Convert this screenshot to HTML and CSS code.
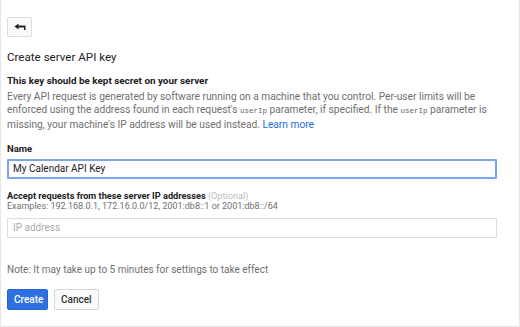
FILE: index.html
```html
<!DOCTYPE html>
<html>
<head>
    <title>Create server API key</title>
    <meta name="viewport" content="width=device-width, initial-scale=1.0">
    <link rel="stylesheet" href="styles.css">
</head>
<body>
    <div class="panel">
        <button class="back-btn" type="button" aria-label="Back">
            <svg width="12" height="9" viewBox="0 0 12 9">
                <path d="M0.5 3.5 L4.5 0.5 L4.5 2.6 L11.5 2.6 L11.5 7 L10 7 L10 4.4 L4.5 4.4 L4.5 6.5 Z" fill="#222"/>
            </svg>
        </button>

        <h1>Create server API key</h1>

        <h2>This key should be kept secret on your server</h2>
        <p class="desc">
            Every API request is generated by software running on a machine that you control. Per-user limits will be<br>
            enforced using the address found in each request's <code>userIp</code> parameter, if specified. If the <code>userIp</code> parameter is<br>
            missing, your machine's IP address will be used instead. <a href="#">Learn more</a>
        </p>

        <!-- 이름 입력 -->
        <label class="field-label" for="key-name">Name</label>
        <input type="text" id="key-name" class="text-input focused" value="My Calendar API Key">

        <!-- IP 주소 입력 -->
        <label class="field-label ip-label" for="ip-input">Accept requests from these server IP addresses <span class="optional">(Optional)</span></label>
        <div class="hint">Examples: 192.168.0.1, 172.16.0.0/12, 2001:db8::1 or 2001:db8::/64</div>
        <input type="text" id="ip-input" class="text-input ip-input" placeholder="IP address">

        <div class="note">Note: It may take up to 5 minutes for settings to take effect</div>

        <div class="actions">
            <button type="button" class="btn primary">Create</button>
            <button type="button" class="btn">Cancel</button>
        </div>
    </div>
</body>
</html>
```

FILE: styles.css
```css
* {
    margin: 0;
    padding: 0;
    box-sizing: border-box;
    font-family: Roboto, 'Liberation Sans', sans-serif;
}

body {
    background: white;
    width: 520px;
    height: 327px;
}

.panel {
    width: 520px;
    height: 327px;
    border: 1px solid #e8e8e8;
    border-top: none;
    padding: 17px 22px 0 6px;
}

.back-btn {
    width: 25px;
    height: 20px;
    background: #fafafa;
    border: 1px solid #dcdcdc;
    border-radius: 2px;
    display: flex;
    align-items: center;
    justify-content: center;
    cursor: pointer;
}

h1 {
    font-size: 11.6px;
    font-weight: 400;
    color: #222;
    margin-top: 13px;
    line-height: 14px;
}

h2 {
    font-size: 9.9px;
    font-weight: 700;
    color: #222;
    margin-top: 10px;
    line-height: 13px;
}

.desc {
    font-size: 10.2px;
    color: #6f6f6f;
    line-height: 13px;
    margin-top: 3px;
    white-space: nowrap;
}

.desc code {
    font-family: 'Liberation Mono', monospace;
    font-size: 7.5px;
    color: #666;
}

.desc a {
    color: #1a6ce0;
    text-decoration: none;
}

.field-label {
    display: block;
    font-size: 9.5px;
    font-weight: 700;
    color: #222;
    margin-top: 11px;
    line-height: 13px;
}

.ip-label {
    font-size: 9.2px;
    margin-top: 11px;
    line-height: 11px;
}

.optional {
    font-weight: 400;
    color: #bbb;
}

.hint {
    font-size: 9px;
    color: #6f6f6f;
    line-height: 10px;
    margin-top: 0;
}

.text-input {
    display: block;
    width: 490px;
    height: 20px;
    margin-top: 4px;
    padding: 0 5px;
    border: 1px solid #dcdcdc;
    border-radius: 1px;
    font-size: 10px;
    color: #222;
    outline: none;
}

.text-input.focused {
    border: 2px solid #7ea4ef;
    padding: 0 4px;
    height: 19.5px;
}

.ip-input {
    margin-top: 7px;
}

.text-input::placeholder {
    color: #aaa;
}

.note {
    font-size: 10px;
    color: #6f6f6f;
    margin-top: 25px;
    line-height: 13px;
}

.actions {
    display: flex;
    gap: 6px;
    margin-top: 13px;
}

.btn {
    height: 21px;
    padding: 0 6px;
    font-size: 10px;
    font-weight: 500;
    color: #333;
    background: #fbfbfb;
    border: 1px solid #d6d6d6;
    border-radius: 2px;
    cursor: pointer;
}

.btn.primary {
    width: 41px;
    background: #2f6fe4;
    border-color: #2a63cc;
    color: white;
}
```
